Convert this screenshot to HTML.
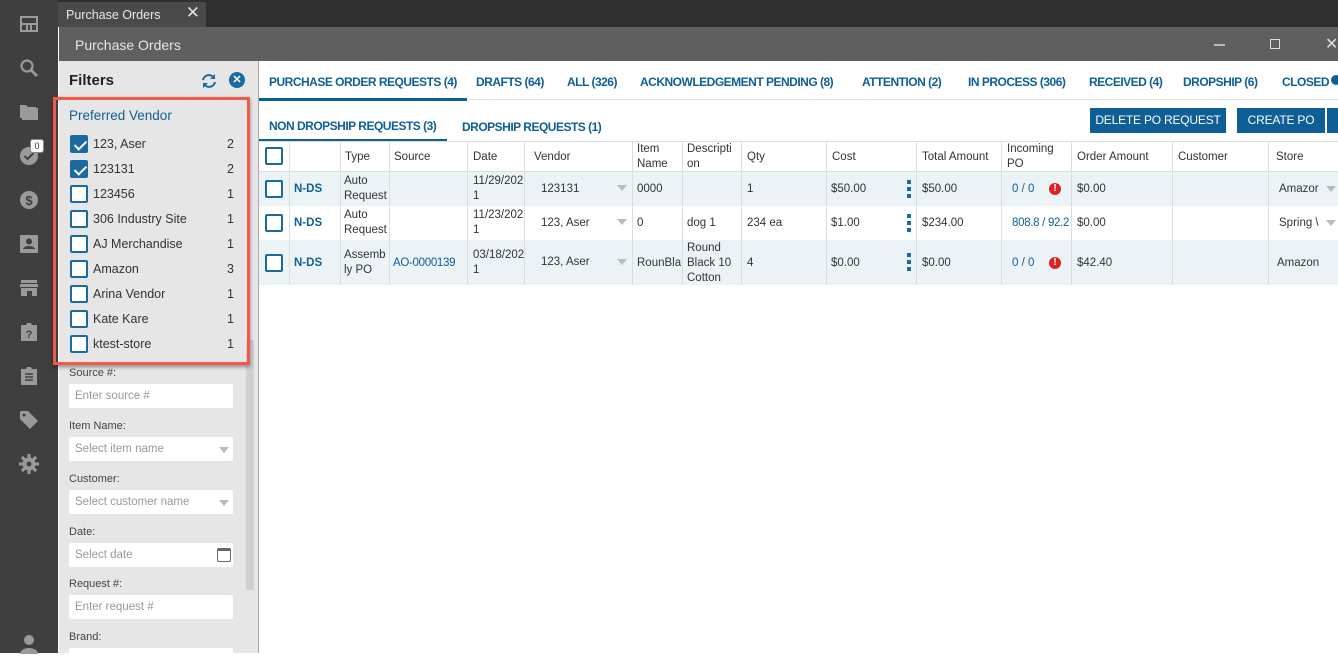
<!DOCTYPE html>
<html><head><style>
*{margin:0;padding:0;box-sizing:border-box}
body{width:1338px;height:653px;overflow:hidden;background:#fff;font-family:"Liberation Sans",sans-serif;font-size:12px;color:#333;position:relative}
.a{position:absolute}
.ic{position:absolute;left:19px;width:20px;height:20px;fill:#9a9a9a}
.blue{color:#0e5f95}
.tab{position:absolute;top:75px;font-weight:bold;font-size:12px;letter-spacing:-0.5px;color:#0e5f95;white-space:nowrap}
.cb{position:absolute;width:18px;height:18px;border:2px solid #1a6aa0;border-radius:2px;background:#fff}
.cb.on{background:#1a6aa0}
.cb.on:after{content:"";position:absolute;left:5px;top:1px;width:5px;height:10px;border:solid #fff;border-width:0 2px 2px 0;transform:rotate(45deg)}
.vn{position:absolute;left:93px;font-size:12.5px;color:#333}
.vc{position:absolute;left:227px;font-size:12.5px}
.lbl{position:absolute;left:69px;font-size:11px;color:#444}
.inp{position:absolute;left:69px;width:164px;height:24px;background:#fff;border-radius:2px;font-size:11.5px;color:#999;padding:6px 6px}
.tri{position:absolute;width:0;height:0;border-left:5px solid transparent;border-right:5px solid transparent;border-top:6px solid #bbb}
.row{position:absolute;left:259px;width:1079px}
.c{position:absolute;font-size:11.5px;line-height:15px;color:#333;white-space:nowrap}
.c.blue{color:#0e5f95}
.vl{position:absolute;top:141px;width:1px;height:144px;background:#ddd}
.dots{position:absolute;width:4px;height:18px;background:linear-gradient(#1a6aa0 0 4px,transparent 4px 7px,#1a6aa0 7px 11px,transparent 11px 14px,#1a6aa0 14px 18px)}
.err{position:absolute;width:12px;height:12px;border-radius:50%;background:#d22;color:#fff;font-size:10px;font-weight:bold;text-align:center;line-height:12px}
.btn{position:absolute;top:108px;height:25px;background:#0e5f95;color:#fff;font-size:12px;text-align:center;line-height:25px;letter-spacing:-0.2px}
</style></head><body>
<div class="a" style="left:0;top:0;width:1338px;height:27px;background:#2f2f2f"></div>
<div class="a" style="left:0;top:0;width:58px;height:653px;background:#3f3f3f"></div>
<div class="a" style="left:58px;top:2px;width:148px;height:25px;background:#4a4a4a;color:#e8e8e8;font-size:12.5px;padding:6px 8px">Purchase Orders<span style="position:absolute;right:6px;top:1px;font-size:17px;color:#ddd">✕</span></div>
<div class="a" style="left:59px;top:27px;width:1279px;height:34px;background:#5f5f5f;color:#e6e6e6;font-size:14px;padding:10px 16px">Purchase Orders</div>
<div class="a" style="left:1214px;top:44px;width:11px;height:2px;background:#bbb"></div>
<div class="a" style="left:1270px;top:39px;width:10px;height:10px;border:1.5px solid #ddd"></div>
<div class="a" style="left:1325px;top:34px;font-size:16px;color:#ddd">✕</div>
<svg class="ic" style="top:14px" viewBox="0 0 20 20"><path d="M1 2h18v16H1zM3 4v5h14V4zM3 11v5h4v-5zm6 0v5h2v-5zm4 0v5h4v-5z"/></svg>
<svg class="ic" style="top:58px" viewBox="0 0 20 20"><circle cx="8" cy="8" r="5.5" fill="none" stroke="#9a9a9a" stroke-width="2.2"/><path d="M12 12l6 6" stroke="#9a9a9a" stroke-width="2.8"/></svg>
<svg class="ic" style="top:102px" viewBox="0 0 20 20"><path d="M1 3h6l2 2h8v11H1z"/><path d="M3 6h16v12H3z" fill="#9a9a9a"/></svg>
<svg class="ic" style="top:146px" viewBox="0 0 20 20"><circle cx="10" cy="10" r="9"/><path d="M5.5 10l3 3 6-6" stroke="#3f3f3f" stroke-width="2" fill="none"/></svg>
<div class="a" style="left:30px;top:139px;width:14px;height:14px;border:1px solid #888;border-radius:3px;background:#fff;font-size:9px;text-align:center;line-height:12px;color:#333">0</div>
<svg class="ic" style="top:190px" viewBox="0 0 20 20"><circle cx="10" cy="10" r="9"/><text x="10" y="15" font-size="13" font-weight="bold" text-anchor="middle" fill="#3f3f3f" font-family="Liberation Sans">$</text></svg>
<svg class="ic" style="top:234px" viewBox="0 0 20 20"><rect x="1" y="1" width="18" height="18" rx="1"/><circle cx="10" cy="7.5" r="3" fill="#3f3f3f"/><path d="M4 15c1-4 11-4 12 0z" fill="#3f3f3f"/></svg>
<svg class="ic" style="top:278px" viewBox="0 0 20 20"><path d="M2 2h16v3H2zM1 6h18v3H1zM2 10h16v8h-5v-5H8v5H2z"/></svg>
<svg class="ic" style="top:322px" viewBox="0 0 20 20"><path d="M2 3h5l1-2h4l1 2h5v16H2z"/><text x="10" y="16" font-size="11" font-weight="bold" text-anchor="middle" fill="#3f3f3f" font-family="Liberation Sans">?</text></svg>
<svg class="ic" style="top:366px" viewBox="0 0 20 20"><path d="M2 3h5l1-2h4l1 2h5v16H2z"/><path d="M6 8h8M6 11h8M6 14h8" stroke="#3f3f3f" stroke-width="1.5"/></svg>
<svg class="ic" style="top:410px" viewBox="0 0 20 20"><path d="M1 2v7l10 10 8-8L9 1H2z"/><circle cx="5" cy="5" r="1.5" fill="#3f3f3f"/></svg>
<svg class="ic" style="top:454px" viewBox="0 0 20 20"><circle cx="10" cy="10" r="6.5"/><path d="M8.5 0h3v20h-3zM0 8.5h20v3H0z"/><path d="M8.5 0h3v20h-3zM0 8.5h20v3H0z" transform="rotate(45 10 10)"/><circle cx="10" cy="10" r="2.5" fill="#3f3f3f"/></svg>
<svg class="ic" style="top:634px" viewBox="0 0 20 20"><circle cx="10" cy="6" r="5"/><path d="M1 20c0-8 18-8 18 0z"/></svg>
<div class="a" style="left:59px;top:61px;width:199px;height:592px;background:#e6e6e6"></div>
<div class="a" style="left:246px;top:340px;width:8px;height:250px;background:#d0d0d0"></div>
<div class="a" style="left:258px;top:61px;width:1px;height:592px;background:#aaa"></div>
<div class="a" style="left:69px;top:72px;font-size:15px;font-weight:bold;color:#222">Filters</div>
<svg class="a" style="left:200px;top:72px" width="18" height="18" viewBox="0 0 18 18"><path d="M3 8a6 6 0 0 1 11-2M15 10a6 6 0 0 1-11 2" stroke="#1a6aa0" stroke-width="2" fill="none"/><path d="M15 2v5h-5zM3 16v-5h5z" fill="#1a6aa0"/></svg>
<div class="a" style="left:229px;top:72px;width:16px;height:16px;border-radius:50%;background:#1a6aa0;color:#fff;font-size:11px;font-weight:bold;text-align:center;line-height:16px">✕</div>
<div class="a" style="left:53px;top:97px;width:197px;height:268px;border:3px solid #f05a4a;box-shadow:0 2px 4px rgba(0,0,0,.4)"></div>
<div class="a blue" style="left:69px;top:108px;font-size:13.5px">Preferred Vendor</div>
<div class="cb on" style="left:70px;top:135px"></div><div class="vn" style="top:137px">123, Aser</div><div class="vc" style="top:137px">2</div>
<div class="cb on" style="left:70px;top:160px"></div><div class="vn" style="top:162px">123131</div><div class="vc" style="top:162px">2</div>
<div class="cb" style="left:70px;top:185px"></div><div class="vn" style="top:187px">123456</div><div class="vc" style="top:187px">1</div>
<div class="cb" style="left:70px;top:210px"></div><div class="vn" style="top:212px">306 Industry Site</div><div class="vc" style="top:212px">1</div>
<div class="cb" style="left:70px;top:235px"></div><div class="vn" style="top:237px">AJ Merchandise</div><div class="vc" style="top:237px">1</div>
<div class="cb" style="left:70px;top:260px"></div><div class="vn" style="top:262px">Amazon</div><div class="vc" style="top:262px">3</div>
<div class="cb" style="left:70px;top:285px"></div><div class="vn" style="top:287px">Arina Vendor</div><div class="vc" style="top:287px">1</div>
<div class="cb" style="left:70px;top:310px"></div><div class="vn" style="top:312px">Kate Kare</div><div class="vc" style="top:312px">1</div>
<div class="cb" style="left:70px;top:335px"></div><div class="vn" style="top:337px">ktest-store</div><div class="vc" style="top:337px">1</div>
<div class="lbl" style="top:367px">Source #:</div>
<div class="inp" style="top:384px">Enter source #</div>
<div class="lbl" style="top:420px">Item Name:</div>
<div class="inp" style="top:437px">Select item name</div><div class="tri" style="left:219px;top:447px"></div>
<div class="lbl" style="top:473px">Customer:</div>
<div class="inp" style="top:490px">Select customer name</div><div class="tri" style="left:219px;top:500px"></div>
<div class="lbl" style="top:526px">Date:</div>
<div class="inp" style="top:543px">Select date</div>
<div class="a" style="left:217px;top:548px;width:14px;height:14px;border:1.5px solid #666;border-top-width:3px;border-radius:2px"></div>
<div class="lbl" style="top:578px">Request #:</div>
<div class="inp" style="top:595px">Enter request #</div>
<div class="lbl" style="top:631px">Brand:</div>
<div class="inp" style="top:648px"></div>
<div class="a" style="left:259px;top:99px;width:1079px;height:1px;background:#e3e3e3"></div>
<div class="a" style="left:259px;top:98px;width:208px;height:3px;background:#0e5f95"></div>
<div class="tab" style="left:269px">PURCHASE ORDER REQUESTS (4)</div>
<div class="tab" style="left:476px">DRAFTS (64)</div>
<div class="tab" style="left:567px">ALL (326)</div>
<div class="tab" style="left:640px">ACKNOWLEDGEMENT PENDING (8)</div>
<div class="tab" style="left:862px">ATTENTION (2)</div>
<div class="tab" style="left:968px">IN PROCESS (306)</div>
<div class="tab" style="left:1089px">RECEIVED (4)</div>
<div class="tab" style="left:1183px">DROPSHIP (6)</div>
<div class="tab" style="left:1282px">CLOSED</div>
<div class="a" style="left:1331px;top:75px;width:10px;height:10px;border-radius:50%;background:#0e5f95"></div>
<div class="tab" style="left:269px;top:119px">NON DROPSHIP REQUESTS (3)</div>
<div class="tab" style="left:462px;top:120px">DROPSHIP REQUESTS (1)</div>
<div class="a" style="left:259px;top:139px;width:188px;height:3px;background:#0e5f95"></div>
<div class="btn" style="left:1090px;width:136px">DELETE PO REQUEST</div>
<div class="btn" style="left:1237px;width:88px">CREATE PO</div>
<div class="btn" style="left:1327px;width:11px"></div>
<div class="a" style="left:259px;top:141px;width:1079px;height:1px;background:#ddd"></div>
<div class="a" style="left:259px;top:171px;width:1079px;height:1px;background:#ddd"></div>
<div class="row" style="top:172px;height:34px;background:#ecf3f7"></div>
<div class="row" style="top:206px;height:34px;background:#fff"></div>
<div class="row" style="top:240px;height:45px;background:#ecf3f7"></div>
<div class="vl" style="left:289px"></div><div class="vl" style="left:340px"></div><div class="vl" style="left:389px"></div><div class="vl" style="left:467px"></div><div class="vl" style="left:524px"></div><div class="vl" style="left:632px"></div><div class="vl" style="left:682px"></div><div class="vl" style="left:741px"></div><div class="vl" style="left:826px"></div><div class="vl" style="left:916px"></div><div class="vl" style="left:1001px"></div><div class="vl" style="left:1071px"></div><div class="vl" style="left:1172px"></div><div class="vl" style="left:1268px"></div>
<div class="cb" style="left:265px;top:147px"></div>
<div class="c" style="left:345px;top:150px">Type</div>
<div class="c" style="left:394px;top:150px">Source</div>
<div class="c" style="left:473px;top:150px">Date</div>
<div class="c" style="left:534px;top:150px">Vendor</div>
<div class="c" style="left:637px;top:142px">Item<br>Name</div>
<div class="c" style="left:687px;top:142px">Descripti<br>on</div>
<div class="c" style="left:747px;top:150px">Qty</div>
<div class="c" style="left:832px;top:150px">Cost</div>
<div class="c" style="left:922px;top:150px">Total Amount</div>
<div class="c" style="left:1007px;top:142px">Incoming<br>PO</div>
<div class="c" style="left:1077px;top:150px">Order Amount</div>
<div class="c" style="left:1178px;top:150px">Customer</div>
<div class="c" style="left:1276px;top:150px">Store</div>
<div class="cb" style="left:265px;top:180px"></div>
<div class="c blue" style="left:294px;top:182px;font-weight:bold">N-DS</div>
<div class="c" style="left:344px;top:174px">Auto<br>Request</div>
<div class="c" style="left:473px;top:174px">11/29/202<br>1</div>
<div class="c" style="left:541px;top:182px">123131</div><div class="tri" style="left:617px;top:185px"></div>
<div class="c" style="left:637px;top:182px">0000</div>
<div class="c" style="left:747px;top:182px">1</div>
<div class="c" style="left:831px;top:182px">$50.00</div><div class="dots" style="left:907px;top:180px"></div>
<div class="c" style="left:922px;top:182px">$50.00</div>
<div class="c blue" style="left:1012px;top:182px">0 / 0</div><div class="err" style="left:1049px;top:183px">!</div>
<div class="c" style="left:1077px;top:182px">$0.00</div>
<div class="c" style="left:1279px;top:182px">Amazor</div><div class="tri" style="left:1326px;top:186px"></div>
<div class="cb" style="left:265px;top:214px"></div>
<div class="c blue" style="left:294px;top:216px;font-weight:bold">N-DS</div>
<div class="c" style="left:344px;top:208px">Auto<br>Request</div>
<div class="c" style="left:473px;top:208px">11/23/202<br>1</div>
<div class="c" style="left:541px;top:216px">123, Aser</div><div class="tri" style="left:617px;top:219px"></div>
<div class="c" style="left:637px;top:216px">0</div>
<div class="c" style="left:687px;top:216px">dog 1</div>
<div class="c" style="left:747px;top:216px">234 ea</div>
<div class="c" style="left:831px;top:216px">$1.00</div><div class="dots" style="left:907px;top:214px"></div>
<div class="c" style="left:922px;top:216px">$234.00</div>
<div class="c blue" style="left:1012px;top:216px;letter-spacing:-0.3px">808.8 / 92.2</div>
<div class="c" style="left:1077px;top:216px">$0.00</div>
<div class="c" style="left:1279px;top:216px">Spring \</div><div class="tri" style="left:1326px;top:220px"></div>
<div class="cb" style="left:265px;top:254px"></div>
<div class="c blue" style="left:294px;top:256px;font-weight:bold">N-DS</div>
<div class="c" style="left:344px;top:248px">Assemb<br>ly PO</div>
<div class="c blue" style="left:393px;top:256px;letter-spacing:-0.3px">AO-0000139</div>
<div class="c" style="left:473px;top:248px">03/18/202<br>1</div>
<div class="c" style="left:541px;top:255px">123, Aser</div><div class="tri" style="left:617px;top:259px"></div>
<div class="c" style="left:637px;top:256px;width:44px;overflow:hidden">RounBla</div>
<div class="c" style="left:687px;top:241px">Round<br>Black 10<br>Cotton</div>
<div class="c" style="left:747px;top:256px">4</div>
<div class="c" style="left:831px;top:256px">$0.00</div><div class="dots" style="left:907px;top:253px"></div>
<div class="c" style="left:922px;top:256px">$0.00</div>
<div class="c blue" style="left:1012px;top:256px">0 / 0</div><div class="err" style="left:1049px;top:257px">!</div>
<div class="c" style="left:1077px;top:256px">$42.40</div>
<div class="c" style="left:1277px;top:256px">Amazon</div>
</body></html>
